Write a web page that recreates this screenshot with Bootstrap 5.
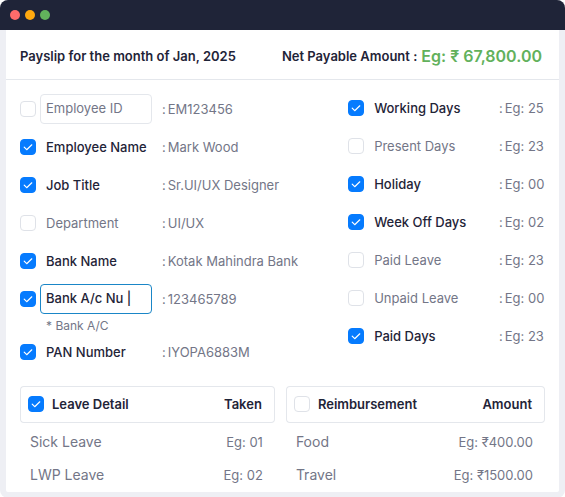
<!DOCTYPE html>
<html lang="en">
<head>
<meta charset="utf-8">
<meta name="viewport" content="width=device-width, initial-scale=1">
<title>Payslip</title>
<link href="https://cdn.jsdelivr.net/npm/bootstrap@5.3.0/dist/css/bootstrap.min.css" rel="stylesheet">
<style>
:root { --ink: #1f2438; --soft: #737687; --line: #e4e7ec; --frame: #eeeff4; }
body { font-family: Inter, "Noto Sans", sans-serif; font-size: 13px; line-height: 20px; color: var(--soft); background: #fff; }
.window { background: var(--frame); border-radius: 8px; padding-bottom: 6px; }
.titlebar { background: var(--ink); height: 30px; padding-left: 10px; gap: 5px; }
.light { width: 10px; height: 10px; border-radius: 50%; }
.light-close { background: #ff6b6b; }
.light-min { background: #ffa90f; }
.light-max { background: #62b15c; }
.sheet { margin: 0 6px; border-radius: 0 0 2px 2px; }
.sheet-head { padding: 14px 17px 11px 14px; min-height: 50px; border-bottom: 1px solid var(--line); color: var(--ink); }
.title { font-size: 13px; line-height: 24px; font-weight: 600; }
.net { color: #62b15c; font-size: 16px; font-weight: 600; }
.fields { display: grid; grid-template-columns: 5fr 3fr; padding: 13px 14px 19px; }
.field { display: grid; grid-template-columns: 16px 112px 1fr; column-gap: 4px; align-items: center; min-height: 30px; margin-bottom: 8px; }
.identity { padding-top: 1px; }
.days .field { grid-template-columns: 16px 1fr 46px; }
.caption { padding-left: 6px; }
.picked { color: var(--ink); font-weight: 500; }
.amount { display: flex; gap: 2px; white-space: nowrap; }
.identity .amount { padding-left: 6px; }
.form-check-input.tick { width: 16px; height: 16px; margin: 0; border: 1px solid #dfe2e8; border-radius: 4px; display: block; float: none; }
.form-check-input.tick:checked { background-color: #067bfe; border-color: #067bfe; background-size: 10px 10px;
  background-image: url("data:image/svg+xml,%3Csvg xmlns='http://www.w3.org/2000/svg' viewBox='0 0 10 10'%3E%3Cpath fill='none' stroke='%23fff' stroke-width='1.2' stroke-linecap='round' stroke-linejoin='round' d='M1.2 5.2l2.5 2.5L8.8 2.8'/%3E%3C/svg%3E"); }
.form-control.name-box { height: 30px; padding: 0 5px 2px; font-size: 13px; border: 1px solid var(--line); border-radius: 4px; color: var(--soft); }
.form-control.name-box.editing { border-color: #1a86c7; color: var(--ink); font-weight: 500; }
.hint { grid-column: 2 / -1; padding-left: 6px; font-size: 12px; line-height: 16px; margin-top: 4px; margin-bottom: -5px; }
.lists { display: grid; grid-template-columns: 60fr 61fr; column-gap: 11px; padding: 0 14px; }
.list-table { width: 100%; border-collapse: separate; border-spacing: 0; align-self: start; }
.list-table th { height: 37px; padding: 0 12px 1px 7px; font-weight: 600; color: var(--ink); border: solid var(--line); }
.list-table th:first-child { border-width: 1px 0 1px 1px; border-radius: 4px 0 0 4px; }
.list-table th:last-child { border-width: 1px 1px 1px 0; border-radius: 0 4px 4px 0; text-align: right; }
.list-table td { height: 33px; padding: 0 12px 0 10px; }
.list-table td:first-child { font-size: 14px; }
.list-table td:last-child { text-align: right; }
.list-table tbody tr:first-child td { height: 35px; padding-top: 3px; }
.list-table tbody tr:last-child td { height: 34px; padding-bottom: 1px; }
</style>
<script src="https://cdn.jsdelivr.net/npm/bootstrap@5.3.0/dist/js/bootstrap.bundle.min.js"></script>
</head>
<body>
<main class="window overflow-hidden">
  <div class="titlebar d-flex align-items-center">
    <span class="light light-close"></span><span class="light light-min"></span><span class="light light-max"></span>
  </div>
  <div class="sheet bg-white">
    <header class="sheet-head d-flex justify-content-between align-items-center">
      <h1 class="title m-0">Payslip for the month of Jan, 2025</h1>
      <div class="d-flex align-items-center gap-1"><span class="title">Net Payable Amount :</span><span class="net">Eg: ₹ 67,800.00</span></div>
    </header>
    <form class="fields">
      <div class="identity">
        <div class="field"><input class="form-check-input tick" type="checkbox" aria-label="Show Employee ID"><input class="form-control name-box" type="text" value="Employee ID" aria-label="Employee ID label"><span class="amount"><span>:</span><span>EM123456</span></span></div>
        <div class="field"><input class="form-check-input tick" type="checkbox" id="f2" checked><label class="caption picked" for="f2">Employee Name</label><span class="amount"><span>:</span><span>Mark Wood</span></span></div>
        <div class="field"><input class="form-check-input tick" type="checkbox" id="f3" checked><label class="caption picked" for="f3">Job Title</label><span class="amount"><span>:</span><span>Sr.UI/UX Designer</span></span></div>
        <div class="field"><input class="form-check-input tick" type="checkbox" id="f4"><label class="caption" for="f4">Department</label><span class="amount"><span>:</span><span>UI/UX</span></span></div>
        <div class="field"><input class="form-check-input tick" type="checkbox" id="f5" checked><label class="caption picked" for="f5">Bank Name</label><span class="amount"><span>:</span><span>Kotak Mahindra Bank</span></span></div>
        <div class="field"><input class="form-check-input tick" type="checkbox" aria-label="Show bank account" checked><input class="form-control name-box editing" type="text" value="Bank A/c Nu |" aria-label="Bank account label"><span class="amount"><span>:</span><span>123465789</span></span><span class="hint">* Bank A/C</span></div>
        <div class="field mb-0"><input class="form-check-input tick" type="checkbox" id="f7" checked><label class="caption picked" for="f7">PAN Number</label><span class="amount"><span>:</span><span>IYOPA6883M</span></span></div>
      </div>
      <div class="days">
        <div class="field"><input class="form-check-input tick" type="checkbox" id="d1" checked><label class="caption picked" for="d1">Working Days</label><span class="amount"><span>:</span><span>Eg: 25</span></span></div>
        <div class="field"><input class="form-check-input tick" type="checkbox" id="d2"><label class="caption" for="d2">Present Days</label><span class="amount"><span>:</span><span>Eg: 23</span></span></div>
        <div class="field"><input class="form-check-input tick" type="checkbox" id="d3" checked><label class="caption picked" for="d3">Holiday</label><span class="amount"><span>:</span><span>Eg: 00</span></span></div>
        <div class="field"><input class="form-check-input tick" type="checkbox" id="d4" checked><label class="caption picked" for="d4">Week Off Days</label><span class="amount"><span>:</span><span>Eg: 02</span></span></div>
        <div class="field"><input class="form-check-input tick" type="checkbox" id="d5"><label class="caption" for="d5">Paid Leave</label><span class="amount"><span>:</span><span>Eg: 23</span></span></div>
        <div class="field"><input class="form-check-input tick" type="checkbox" id="d6"><label class="caption" for="d6">Unpaid Leave</label><span class="amount"><span>:</span><span>Eg: 00</span></span></div>
        <div class="field"><input class="form-check-input tick" type="checkbox" id="d7" checked><label class="caption picked" for="d7">Paid Days</label><span class="amount"><span>:</span><span>Eg: 23</span></span></div>
      </div>
    </form>
    <div class="lists">
      <table class="list-table">
        <thead><tr><th scope="col"><span class="d-flex align-items-center gap-2"><input class="form-check-input tick" type="checkbox" id="t1" checked><label for="t1">Leave Detail</label></span></th><th scope="col">Taken</th></tr></thead>
        <tbody><tr><td>Sick Leave</td><td>Eg: 01</td></tr><tr><td>LWP Leave</td><td>Eg: 02</td></tr></tbody>
      </table>
      <table class="list-table">
        <thead><tr><th scope="col"><span class="d-flex align-items-center gap-2"><input class="form-check-input tick" type="checkbox" id="t2"><label for="t2">Reimbursement</label></span></th><th scope="col">Amount</th></tr></thead>
        <tbody><tr><td>Food</td><td>Eg: ₹400.00</td></tr><tr><td>Travel</td><td>Eg: ₹1500.00</td></tr></tbody>
      </table>
    </div>
  </div>
</main>
</body>
</html>
